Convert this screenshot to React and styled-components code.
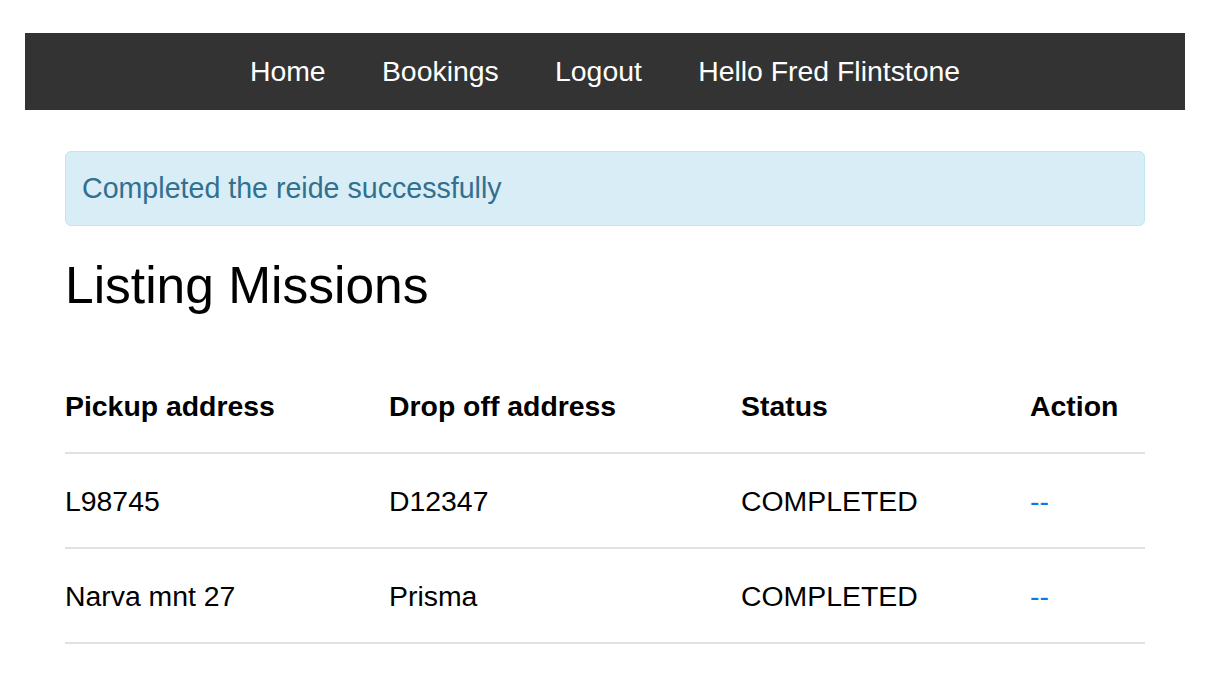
import React from "react"
import styled, { createGlobalStyle } from "styled-components"

const GlobalStyle = createGlobalStyle`
  html, body {
    margin: 0;
    padding: 0;
    background: #fff;
  }
  body {
    font-family: "Liberation Sans", Arial, sans-serif;
    font-size: 28.4px;
    color: #000;
  }
`

const Page = styled.div`
  width: 1160px;
  padding: 33px 0 0 25px;
`

const NavBar = styled.nav`
  height: 77px;
  background: #333333;
  display: flex;
  align-items: center;
  justify-content: center;
  gap: 56.3px;
`

const NavLink = styled.a`
  color: #fff;
  font-size: 28.4px;
  line-height: 40px;
  margin-bottom: 2px;
  text-decoration: none;
`

const Container = styled.main`
  margin: 41px 40px 0 40px;
`

const Alert = styled.div`
  background: #d9edf7;
  border: 1px solid #bce8f1;
  border-radius: 6px;
  color: #31708f;
  padding: 16px 16px;
  line-height: 41px;
  font-size: 28.6px;
`

const Title = styled.h1`
  font-size: 51.5px;
  font-weight: normal;
  line-height: 61px;
  margin: 29px 0 43px;
`

const Table = styled.table`
  width: 100%;
  border-collapse: collapse;
  table-layout: fixed;
`

const Cell = styled.td`
  padding: 24.5px 0 24.5px;
  line-height: 44px;
  text-align: left;
  border-bottom: 2px solid #e1e1e1;
  width: ${(p) => p.$w}px;
  white-space: nowrap;
`

const HeadCell = styled(Cell).attrs({ as: "th" })`
  font-weight: bold;
`

const ActionLink = styled.a`
  color: #0a7ae6;
  text-decoration: none;
`

const columns = [
  { label: "Pickup address", w: 324 },
  { label: "Drop off address", w: 352 },
  { label: "Status", w: 289 },
  { label: "Action", w: 115 },
]

const missions = [
  { pickup: "L98745", dropoff: "D12347", status: "COMPLETED" },
  { pickup: "Narva mnt 27", dropoff: "Prisma", status: "COMPLETED" },
]

export default function App() {
  return (
    <>
      <GlobalStyle />
      <Page>
        <NavBar>
          <NavLink href="#">Home</NavLink>
          <NavLink href="#">Bookings</NavLink>
          <NavLink href="#">Logout</NavLink>
          <NavLink href="#">Hello Fred Flintstone</NavLink>
        </NavBar>
        <Container>
          <Alert>Completed the reide successfully</Alert>
          <Title>Listing Missions</Title>
          <Table>
            <thead>
              <tr>
                {columns.map((c) => (
                  <HeadCell key={c.label} $w={c.w}>
                    {c.label}
                  </HeadCell>
                ))}
              </tr>
            </thead>
            <tbody>
              {missions.map((m, i) => (
                <tr key={i}>
                  <Cell>{m.pickup}</Cell>
                  <Cell>{m.dropoff}</Cell>
                  <Cell>{m.status}</Cell>
                  <Cell>
                    <ActionLink href="#">--</ActionLink>
                  </Cell>
                </tr>
              ))}
            </tbody>
          </Table>
        </Container>
      </Page>
    </>
  )
}
